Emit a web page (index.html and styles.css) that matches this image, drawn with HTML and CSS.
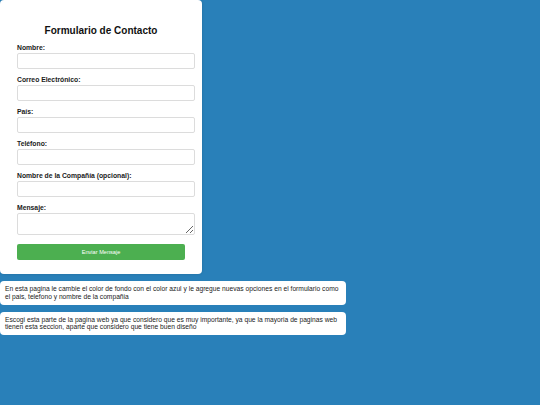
FILE: index.html
```html
<!DOCTYPE html>
<html lang="es">
<head>
<meta charset="utf-8">
<title>Formulario de Contacto</title>
<link rel="stylesheet" href="styles.css">
</head>
<body>
<div class="card">
  <h1 class="title">Formulario de Contacto</h1>
  <form class="form">
    <div class="field"><label class="label">Nombre:</label><input class="input" type="text"></div>
    <div class="field"><label class="label">Correo Electrónico:</label><input class="input" type="email"></div>
    <div class="field"><label class="label">País:</label><input class="input" type="text"></div>
    <div class="field"><label class="label">Teléfono:</label><input class="input" type="tel"></div>
    <div class="field"><label class="label">Nombre de la Compañía (opcional):</label><input class="input" type="text"></div>
    <div class="field"><label class="label">Mensaje:</label><textarea class="input textarea"></textarea></div>
    <button class="button" type="button">Enviar Mensaje</button>
  </form>
</div>
<div class="note">En esta pagina le cambie el color de fondo con el color azul y le agregue nuevas opciones en el formulario como el pais, telefono y nombre de la compañia</div>
<div class="note">Escogi esta parte de la pagina web ya que considero que es muy importante, ya que la mayoria de paginas web tienen esta seccion, aparte que considero que tiene buen diseño</div>
</body>
</html>
```
FILE: styles.css
```css
html, body {
  margin: 0;
  padding: 0;
}
body {
  background: #2980b9;
  font-family: "Liberation Sans", Arial, sans-serif;
  width: 540px;
  height: 405px;
  overflow: hidden;
}
.card {
  width: 202px;
  height: 274px;
  box-sizing: border-box;
  background: #fff;
  border-radius: 4px;
  padding: 25px 17px 0 17px;
  box-shadow: 0 0 3px rgba(0,0,0,0.15);
}
.title {
  margin: 0 0 7px 0;
  font-size: 10px;
  line-height: 12px;
  text-align: center;
  color: #111;
  font-weight: bold;
}
.form {
  display: flex;
  flex-direction: column;
}
.field {
  display: flex;
  flex-direction: column;
  margin-bottom: 7px;
}
.label {
  font-size: 6.8px;
  line-height: 8px;
  font-weight: bold;
  color: #1a1a1a;
  margin-bottom: 1px;
}
.input {
  width: 178px;
  height: 16px;
  box-sizing: border-box;
  border: 0.6px solid #dcdcdc;
  border-radius: 2px;
  margin: 0;
  padding: 2px 4px;
  background: #fff;
  font-family: inherit;
  font-size: 6.8px;
}
.textarea {
  height: 22px;
  resize: vertical;
  display: block;
}
.button {
  width: 168px;
  height: 16px;
  margin-top: 2px;
  background: #4caf50;
  border: none;
  border-radius: 2px;
  color: #fff;
  font-family: inherit;
  font-size: 5.6px;
  padding: 0;
}
.note {
  width: 346px;
  box-sizing: border-box;
  background: #fff;
  border-radius: 4px;
  margin-top: 7px;
  padding: 4px 3px 4px 5px;
  font-size: 6.7px;
  line-height: 7.8px;
  color: #1a1a1a;
}
```
